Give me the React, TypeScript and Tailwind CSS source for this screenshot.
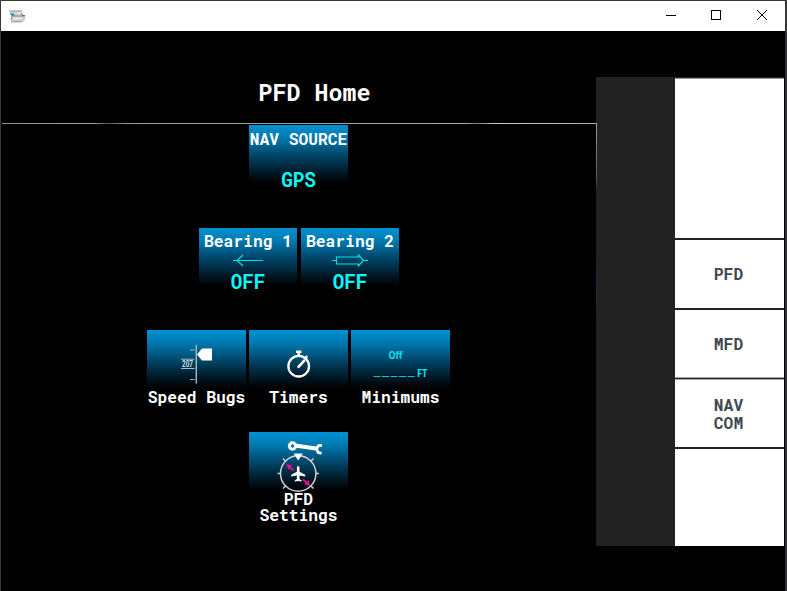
import type { ReactNode } from "react";

const mono = "font-['Roboto_Mono','DejaVu_Sans_Mono',monospace] font-bold";

function Tile({ children, width = "w-[99px]" }: { children?: ReactNode; width?: string }) {
  return (
    <div className={`flex h-[99px] ${width} flex-col items-center bg-[linear-gradient(#0092d4_0px,#007bb2_12px,#00476a_30px,#001b2a_46px,#000_58px)] text-center text-[16.3px] leading-[16px] whitespace-nowrap text-white`}>
      {children}
    </div>
  );
}

function Row({ children, spacing = "gap-[3px]" }: { children: ReactNode; spacing?: string }) {
  return <div className={`flex h-[102.3px] justify-center ${spacing}`}>{children}</div>;
}

function Value({ children }: { children: ReactNode }) {
  return <span className="block text-[19.3px] leading-[20px] text-[#00ffff]">{children}</span>;
}

function AppIcon() {
  return (
    <svg width="17" height="13" viewBox="0 0 17 13">
      <path d="M0.500 1.500h12.500l1 2v3h2v3.500l-2 1.500H3L1.500 9l1-3z" fill="#cfcfcf" />
      <path d="M0 1h13M2 11.800h11.500M3 6l-1 4M9 2l5 3M3 6h10" stroke="#8b8b8b" strokeWidth="1" fill="none" />
      <path d="M4 8.500h9M8 3h4" stroke="#efefef" strokeWidth="1.500" />
      <path d="M0.500 3.500h4l1 2.500-3-.5zM13 5h3v1.500h-3z" fill="#2389ae" />
    </svg>
  );
}

function SpeedIcon() {
  return (
    <svg className="mt-[14px]" width="99" height="42" viewBox="0 0 99 42">
      <path d="M49.300 1v38.500" stroke="#a9bac3" strokeWidth="1.400" />
      <path d="M43 6h4.500M43 35.500h4.500M34 15.200h13.500M34 24.500h13.500" stroke="#a9bac3" strokeWidth="1" />
      <text x="35" y="22.900" fontSize="8.500" textLength="11" lengthAdjust="spacingAndGlyphs" className="font-[Roboto]" fill="#d2dbe0">207</text>
      <path d="M50 10.500 55 4.500h10v12H55z" fill="#fff" />
    </svg>
  );
}

function TimerIcon() {
  return (
    <svg className="mt-[19px]" width="26" height="37" viewBox="0 0 26 37">
      <circle cx="12.700" cy="17.200" r="10.300" fill="none" stroke="#fff" strokeWidth="2.300" />
      <path d="M10 2.700h5.400M12.700 2.700v4M19.700 8.700l1.500-1.500" fill="none" stroke="#fff" strokeWidth="2.500" />
      <path d="M12.500 17.800l5.700-6.100" stroke="#fff" strokeWidth="2.700" strokeLinecap="round" />
    </svg>
  );
}

function MinimumsIcon() {
  return (
    <svg className="mt-[16px] font-['Open_Sans']" width="99" height="40" viewBox="0 0 99 40">
      <g fill="#00e3e6" fontWeight="700">
        <text x="37.500" y="12.700" fontSize="9.800" textLength="14" lengthAdjust="spacingAndGlyphs">Off</text>
        <text x="66" y="31" fontSize="9.800" textLength="10.500" lengthAdjust="spacingAndGlyphs">FT</text>
      </g>
      <path d="M22.500 30.500h42" stroke="#00c9cf" strokeWidth="1.200" strokeDasharray="7 1.500" />
    </svg>
  );
}

function SettingsIcon() {
  return (
    <svg className="h-[60px] w-[99px] shrink-0" viewBox="0 0 99 60">
      <circle cx="49.200" cy="41.500" r="17.700" fill="none" stroke="#cbd2d6" strokeWidth="1.500" />
      <path d="M28.500 41.500h3.500M66.500 41.500H70M34 26.500l3 3M64.500 26.500l-3 3M34 56.500l3-3M64.500 56.500l-3-3" stroke="#cbd2d6" strokeWidth="1.500" />
      <path d="M44.700 21.500h9l-4.500 7z" fill="#fff" />
      <path d="M49.200 34c-.9 0-1.300 1-1.300 2.300v3.400l-5.700 3V44.500l5.700-1v3.500l-2.200 1.500v1l3.500-.5 3.500.5v-1L50.500 47v-3.500l5.700 1v-1.800l-5.700-3v-3.400c0-1.300-.4-2.300-1.300-2.300z" fill="#fff" />
      <path d="M44.500 38.500l-4-3.500M54 47.500l4 3.500" stroke="#e0118c" strokeWidth="1.800" />
      <path d="M37.300 32l6 1.500-4 4.300zM61.500 54l-6-1.500 4-4.300z" fill="#e0118c" />
      <path d="M46 13.500 67 16.500" stroke="#fff" strokeWidth="4" />
      <circle cx="43.500" cy="14" r="3.200" fill="none" stroke="#fff" strokeWidth="3" />
      <path d="M73 13.300l-3.500.3-2 3 1.500 3.800 3.500 1" fill="none" stroke="#fff" strokeWidth="2.800" />
    </svg>
  );
}

export default function App() {
  return (
    <div className="flex h-[591px] w-[787px] flex-col overflow-hidden border-t border-r-2 border-l border-[#38383a] bg-black">
      <header className="flex h-[30px] shrink-0 items-center bg-white pl-2">
        <AppIcon />
        <svg className="ml-auto" width="120" height="30" viewBox="0 0 120 30" fill="none" stroke="#000">
          <path d="M1 14.500h10" />
          <rect x="46.500" y="9.500" width="9" height="9" />
          <path d="M92 9l10 10M102 9l-10 10" />
        </svg>
      </header>
      <div className="flex h-[560px] pt-[46px]">
        <main className={`w-[595px] shrink-0 ${mono}`}>
          <h1 className="flex h-[46px] items-start justify-center pt-px pl-[32px] text-[23.4px] leading-[28px] text-white">PFD Home</h1>
          <div className="ml-px h-px bg-[linear-gradient(90deg,#8d8d83,#a4a69b_15%,#55554e_18%,#9a9b91_21%,#aaa99e_78%,#74766f_80%,#c9cdc7_83%,#a8b5a2)]" />
          <div className="pt-[1.300px]">
            <Row>
              <Tile>
                <span className="mt-[6px]">NAV SOURCE</span>
                <span className="mt-[23px]"><Value>GPS</Value></span>
              </Tile>
            </Row>
            <Row spacing="gap-[4px] pl-px">
              <Tile width="w-[98px]">
                <span className="mt-[5px]">Bearing 1</span>
                <svg className="mt-[5px]" width="32" height="14" viewBox="0 0 32 14" fill="none" stroke="#00dfe2" strokeWidth="1.200"><path d="M1 6.500h30M11 1l-6 5.500 6 5.500" /></svg>
                <span className="mt-[4px]"><Value>OFF</Value></span>
              </Tile>
              <Tile width="w-[98px]">
                <span className="mt-[5px]">Bearing 2</span>
                <svg className="mt-[5px]" width="36" height="14" viewBox="0 0 36 14" fill="none" stroke="#00dfe2" strokeWidth="1.200"><path d="M0 6.500h4.500V3h22V1l5 5.500-5 5.500v-2h-22V6.500M31.500 6.500H36" /></svg>
                <span className="mt-[4px]"><Value>OFF</Value></span>
              </Tile>
            </Row>
            <Row>
              <Tile><SpeedIcon /><span className="mt-[3px]">Speed Bugs</span></Tile>
              <Tile><TimerIcon /><span className="mt-[3px]">Timers</span></Tile>
              <Tile><MinimumsIcon /><span className="mt-[3px]">Minimums</span></Tile>
            </Row>
            <Row>
              <Tile><SettingsIcon /><span className="-mt-px">PFD<br />Settings</span></Tile>
            </Row>
          </div>
        </main>
        <aside className="flex h-[469px] w-[188px] bg-[#222]">
          <div className="w-px bg-[linear-gradient(#222_0_46px,#a79f8a_46px,#877967_70px,#5b5f68_100px,#1c1c1e_115px,#1c1c1e_180px,#0d2950_200px,#2b2b22_225px,#1c1c1e_240px)]" />
          <nav className={`ml-[78px] flex w-[109px] shrink-0 flex-col pt-px text-center text-[16.3px] leading-[18px] text-[#404852] ${mono}`}>
            <div className="h-[160px] border-t border-[#999] bg-white" />
            <button className="mt-[2px] h-[68px] bg-white pr-[2px]">PFD</button>
            <button className="mt-[2px] h-[68px] border-b border-[#aaa] bg-white pr-[2px]">MFD</button>
            <button className="mt-px h-[68px] border-t border-[#aaa] bg-white pr-[2px]">NAV<br />COM</button>
            <div className="mt-[2px] flex-1 bg-white" />
          </nav>
        </aside>
      </div>
    </div>
  );
}
